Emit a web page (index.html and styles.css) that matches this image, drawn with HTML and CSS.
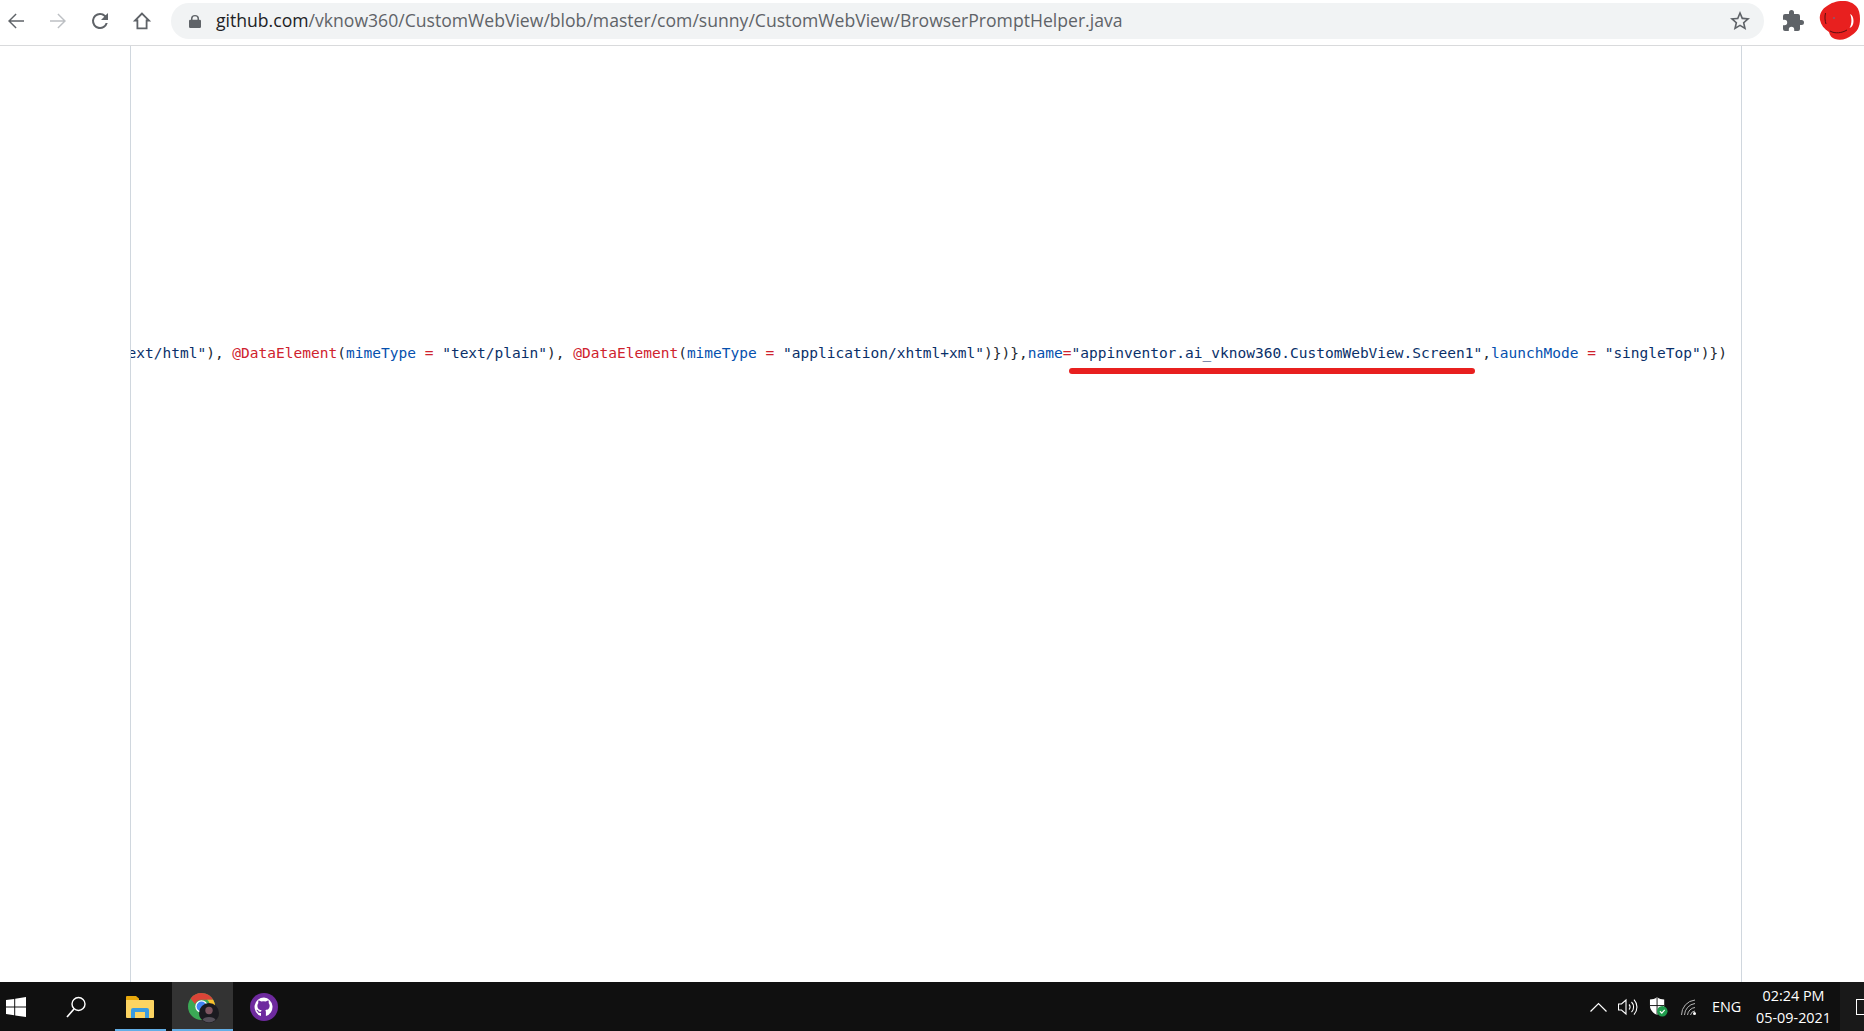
FILE: index.html
```html
<!DOCTYPE html>
<html lang="en">
<head>
<meta charset="utf-8">
<title>BrowserPromptHelper.java</title>
<link rel="stylesheet" href="styles.css">
</head>
<body>
<div class="page">
  <header class="toolbar">
    <div class="nav">
      <button class="tool"><svg viewBox="0 0 24 24" width="24" height="24"><path d="M20 11.200H6.800l5.800-5.800-1-1L4 12l7.600 7.600 1-1-5.800-5.800H20z" fill="#5f6368"/></svg></button>
      <button class="tool"><svg viewBox="0 0 24 24" width="24" height="24"><path d="M4 11.200h13.200l-5.800-5.800 1-1L20 12l-7.600 7.600-1-1 5.800-5.800H4z" fill="#bdc0c4"/></svg></button>
      <button class="tool"><svg viewBox="0 0 24 24" width="24" height="24"><path d="M17.650 6.350A7.960 7.960 0 0 0 12 4a8 8 0 1 0 7.730 10h-2.080A6 6 0 1 1 12 6c1.660 0 3.140.69 4.220 1.780L13 11h7V4z" fill="#5f6368"/></svg></button>
      <button class="tool"><svg viewBox="0 0 24 24" width="24" height="24"><path d="M12 4.500L5 11.500h2.400v7.800h9.200v-7.800H19z" fill="none" stroke="#5f6368" stroke-width="1.800" stroke-linejoin="miter"/></svg></button>
    </div>
    <div class="omnibox">
      <svg class="lock" viewBox="0 0 12 13" width="12" height="13"><path d="M10.800 4.800H10V3.500a4 3.500 0 0 0-8 0v1.300H1.200A1.200 1.200 0 0 0 0 6v5.800A1.200 1.200 0 0 0 1.200 13h9.600a1.200 1.200 0 0 0 1.200-1.200V6a1.200 1.200 0 0 0-1.200-1.200zM3.500 4.800V3.500a2.500 2.200 0 0 1 5 0v1.300z" fill="#5f6368"/></svg>
      <div class="url"><span class="host">github.com</span>/vknow360/CustomWebView/blob/master/com/sunny/CustomWebView/BrowserPromptHelper.java</div>
      <svg class="star" viewBox="0 0 24 24" width="24" height="24"><path d="M22 9.240l-7.190-.62L12 2 9.190 8.630 2 9.240l5.460 4.730L5.820 21 12 17.270 18.180 21l-1.630-7.030zM12 15.400l-3.760 2.270 1-4.280-3.320-2.880 4.380-.38L12 6.100l1.710 4.040 4.380.38-3.320 2.880 1 4.280z" fill="#5f6368"/></svg>
    </div>
    <button class="tool ext"><svg viewBox="0 0 24 24" width="24" height="24"><path d="M20.500 11H19V7a2 2 0 0 0-2-2h-4V3.500a2.500 2.500 0 0 0-5 0V5H4a2 2 0 0 0-2 2v3.800h1.500a2.700 2.700 0 0 1 0 5.400H2V20a2 2 0 0 0 2 2h3.800v-1.500a2.700 2.700 0 0 1 5.400 0V22H17a2 2 0 0 0 2-2v-4h1.500a2.500 2.500 0 0 0 0-5z" fill="#5f6368"/></svg></button>
    <div class="avatar"><svg viewBox="0 0 42 42" width="42" height="42"><path d="M1 20C0 14 3 9 8 6c4-3 9-5 16-5 6 0 10 2 13 5 3 3 4 8 4 13 0 8-3 13-8 16-5 4-11 6-17 4-3-1-5-3-6-7C5 29 2 25 1 20z" fill="#e8201f"/><path d="M6.500 13c-1 4-.5 8 .5 11M11 31c5 3 12 2 17-1" stroke="#5a0f0f" stroke-width="1" fill="none"/><path d="M31 14c2 4 2 10-.5 14 3-1 4-4 4-7s-1-6-3.500-7z" fill="#fff"/><circle cx="15" cy="18" r="1" fill="#8a5a70"/></svg></div>
  </header>

  <main class="main">
    <section class="code-panel">
      <div class="code-line"><code class="code"><span class="str">"text/html"</span>), <span class="ann">@DataElement</span>(<span class="atr">mimeType</span> <span class="op">=</span> <span class="str">"text/plain"</span>), <span class="ann">@DataElement</span>(<span class="atr">mimeType</span> <span class="op">=</span> <span class="str">"application/xhtml+xml"</span>)})},<span class="atr">name</span><span class="op">=</span><span class="mark"><span class="str">"appinventor.ai_vknow360.CustomWebView.Screen1"</span><i class="underline"></i></span>,<span class="atr">launchMode</span> <span class="op">=</span> <span class="str">"singleTop"</span>)})</code></div>
    </section>
  </main>

  <footer class="taskbar">
    <div class="task-left">
      <div class="task start"><svg viewBox="0 0 20 20" width="20" height="20"><path d="M0 3l8.200-1.100v7.700H0zM9.200 1.700L20 0v9.600H9.200zM0 10.500h8.200v7.700L0 17zM9.200 10.500H20V20L9.200 18.400z" fill="#fff"/></svg></div>
      <div class="task search"><svg viewBox="0 0 24 24" width="24" height="24"><circle cx="14.500" cy="9" r="6.500" fill="none" stroke="#fff" stroke-width="1.400"/><path d="M10 14L3 22" stroke="#fff" stroke-width="1.600"/></svg></div>
      <div class="task files running"><svg class="files-icon" viewBox="0 0 28 24" width="28" height="24"><path d="M0 2a1 1 0 0 1 1-1h9l3 2.500V6H0z" fill="#e8a80c"/><path d="M0 5h27a1 1 0 0 1 1 1v16a1 1 0 0 1-1 1H1a1 1 0 0 1-1-1z" fill="#fcd462"/><path d="M5 23V15a2 2 0 0 1 2-2h14a2 2 0 0 1 2 2v8h-4v-6H9v6z" fill="#3a9be0"/></svg></div>
      <div class="task chrome running active"><svg class="chrome-icon" viewBox="0 0 31 30" width="31" height="30"><circle cx="13.500" cy="13.500" r="13.500" fill="#3ba955"/><path d="M13.500 0a13.500 13.500 0 0 1 11.700 6.750H13.500a6.750 6.750 0 0 0-6.400 4.600L2.600 5.500A13.500 13.500 0 0 1 13.500 0z" fill="#db4437"/><path d="M25.200 6.750A13.500 13.500 0 0 1 13.500 27l5.800-10a6.750 6.750 0 0 0 0-10.250z" fill="#fbc02d"/><circle cx="13.500" cy="13.500" r="6.200" fill="#fff"/><circle cx="13.500" cy="13.500" r="4.900" fill="#4285f4"/><circle cx="21" cy="20" r="10" fill="#1a1a20"/><circle cx="21" cy="17.500" r="3.700" fill="#7d5560"/><path d="M14.500 27c1-4 12-4 13 0a10 10 0 0 1-13 0z" fill="#55505a"/></svg></div>
      <div class="task"><svg viewBox="0 0 28 28" width="28" height="28"><circle cx="14" cy="14" r="14" fill="#6e2a9e"/><path d="M14 4.500a9.500 9.500 0 0 0-3 18.500v-3c-2.600.5-3.200-1.200-3.200-1.200-.5-1-1-1.400-1-1.400-.8-.6.1-.6.1-.6 1 .1 1.400 1 1.400 1 .8 1.400 2.200 1 2.800.8 0-.6.3-1 .6-1.300-2.100-.2-4.300-1-4.300-4.700 0-1 .4-1.900 1-2.600-.1-.2-.4-1.200.1-2.500 0 0 .8-.3 2.600 1a9 9 0 0 1 4.800 0c1.800-1.300 2.600-1 2.600-1 .5 1.300.2 2.300.1 2.500.6.7 1 1.600 1 2.600 0 3.700-2.200 4.500-4.300 4.700.3.3.6.9.6 1.700V23A9.500 9.500 0 0 0 14 4.500z" fill="#fff"/></svg></div>
    </div>
    <div class="tray">
      <svg class="tray-icon caret" viewBox="0 0 17 10" width="17" height="10"><path d="M.5 9.500l8-8 8 8" fill="none" stroke="#fff" stroke-width="1.200"/></svg>
      <svg class="tray-icon speaker" viewBox="0 0 20 18" width="20" height="18"><path d="M.5 6h3L8 2v14l-4.500-4h-3z" fill="none" stroke="#fff" stroke-width="1.100"/><path d="M11 6.500a3.500 3.500 0 0 1 0 5M13.500 4a7 7 0 0 1 0 10M16 1.500a11 11 0 0 1 0 15" fill="none" stroke="#fff" stroke-width="1.100"/></svg>
      <svg class="tray-icon shield" viewBox="0 0 20 22" width="19" height="21"><path d="M8.500 1C6.500 3 3.500 3.500 1 3.500V10c0 5 3.500 8 7.500 10 4-2 7.500-5 7.500-10V3.500C13.500 3.500 10.500 3 8.500 1z" fill="#fff"/><path d="M8.500 1v19M1 10h15" stroke="#151515" stroke-width="1"/><circle cx="14" cy="16" r="5.500" fill="#1f9b4c"/><path d="M11.500 16l2 2 3-3.500" fill="none" stroke="#fff" stroke-width="1.200"/></svg>
      <svg class="tray-icon wifi" viewBox="0 0 16 16" width="16" height="16"><path d="M.5 16A15 15 0 0 1 14 1M3.500 16A12 12 0 0 1 14 4.500M6.500 16A8.500 8.500 0 0 1 14 8.500M9.500 16A5 5 0 0 1 14 12" fill="none" stroke="#b5b5b5" stroke-width="1"/><circle cx="13.500" cy="14.500" r="1.500" fill="#fff"/></svg>
      <span class="lang">ENG</span>
      <div class="clock"><span>02:24 PM</span><span>05-09-2021</span></div>
      <div class="show-desktop"><i class="notif"></i></div>
    </div>
  </footer>
</div>
</body>
</html>
```

FILE: styles.css
```css
* { box-sizing: border-box; }
html, body { margin: 0; height: 100%; }
body { background: #fff; overflow: hidden; font-family: "Open Sans", "Noto Sans", sans-serif; }
.page { height: 1031px; display: flex; flex-direction: column; }

.toolbar { height: 46px; flex: none; display: flex; align-items: center; background: #fff; border-bottom: 1px solid #d9dadc; padding-bottom: 3px; }
.nav { display: flex; gap: 10px; width: 171px; flex: none; }
.tool { width: 32px; height: 32px; padding: 0; border: 0; background: none; display: flex; align-items: center; justify-content: center; }
.omnibox { width: 1593px; height: 36px; flex: none; background: #f1f3f4; border-radius: 18px; display: flex; align-items: center; padding: 0 12px 0 18px; }
.lock { flex: none; margin-right: 15px; }
.url { flex: 1; font-size: 17.6px; line-height: 24px; padding-bottom: 2px; color: #5f6368; white-space: nowrap; }
.host { color: #202124; }
.star { flex: none; }
.ext { margin-left: 13px; }
.avatar { width: 42px; height: 42px; margin-left: 10px; flex: none; }

.main { flex: 1; min-height: 0; }
.code-panel { width: 1612px; height: 100%; margin-left: 130px; border-left: 1px solid #d0d7de; border-right: 1px solid #d0d7de; overflow: hidden; padding: 297px 14px 0 0; }
.code-line { display: flex; justify-content: flex-end; white-space: pre; }
.code { font-family: "DejaVu Sans Mono", "Liberation Mono", monospace; font-size: 14.53px; line-height: 20px; color: #24292f; }
.str { color: #0a3069; }
.ann { color: #cf222e; }
.atr { color: #0550ae; }
.op { color: #cf222e; }
.mark { position: relative; }
.underline { position: absolute; left: -2px; right: 7px; top: 23px; height: 6px; border-radius: 3px; background: #e8201f; }

.taskbar { height: 49px; flex: none; background: #101010; display: flex; justify-content: space-between; color: #fff; }
.task-left { display: flex; }
.task { width: 61px; height: 49px; display: flex; align-items: center; justify-content: center; border-bottom: 2px solid transparent; padding-top: 2px; }
.task.start { width: 32px; }
.task.search { width: 60px; margin-left: 14px; }
.task.files { width: 51px; margin-left: 9px; }
.task.chrome { margin-left: 6px; }
.files-icon { margin-right: 2px; }
.chrome-icon { margin: 3px 0 0 2px; }
.task.running { border-bottom-color: #63aee6; }
.task.active { background: #333; }
.tray { display: flex; align-items: center; }
.tray-icon { flex: none; }
.caret { margin-right: 11px; }
.speaker { margin-right: 11px; }
.shield { margin-right: 13px; }
.wifi { margin-right: 15px; }
.lang { font-size: 14.4px; width: 38px; }
.clock { display: flex; flex-direction: column; align-items: center; font-size: 14.4px; line-height: 22px; width: 90px; padding-right: 3px; }
.show-desktop { width: 24px; height: 49px; display: flex; align-items: center; justify-content: flex-end; background: #191919; }
.notif { width: 8px; height: 16px; border: 1px solid #fff; border-right: 0; }
```
